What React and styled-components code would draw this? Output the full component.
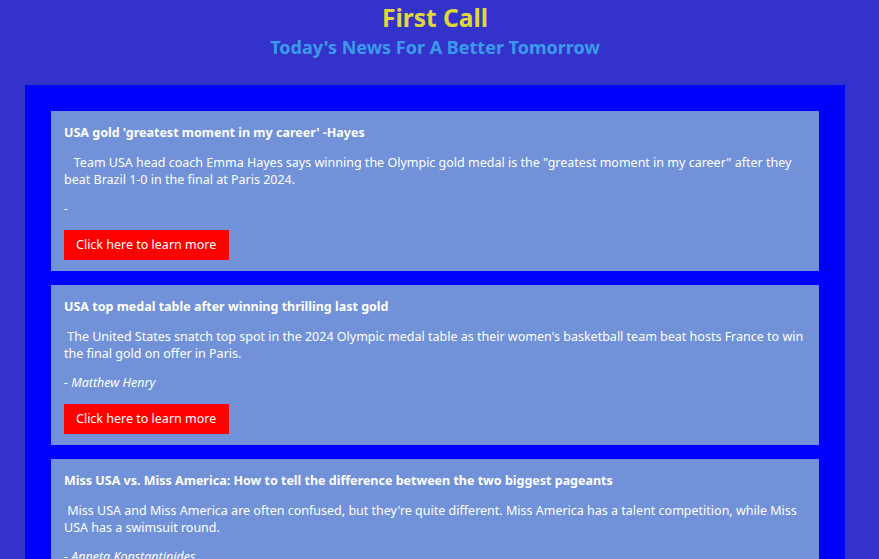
import React from 'react';
import styled, { createGlobalStyle } from 'styled-components';

const GlobalStyle = createGlobalStyle`
  html, body {
    margin: 0;
    padding: 0;
    background: #3333cc;
    font-family: "Noto Sans", "Open Sans", sans-serif;
  }
`;

const Page = styled.div`
  width: 870px;
`;

const Header = styled.header`
  text-align: center;
  padding-top: 2px;
  height: 85px;
  box-sizing: border-box;
`;

const Title = styled.h1`
  margin: 0;
  font-size: 24.5px;
  line-height: 31px;
  font-weight: 700;
  color: #e0d83a;
`;

const Subtitle = styled.h2`
  margin: 0;
  font-size: 18px;
  line-height: 28px;
  font-weight: 700;
  color: #3b9bea;
`;

const Feed = styled.main`
  width: 820px;
  margin: 0 auto;
  background: #0000ff;
  padding: 26px;
  box-sizing: border-box;
  display: flex;
  flex-direction: column;
  gap: 14px;
`;

const Card = styled.article`
  background: #7192d9;
  padding: 13px 13px 11px;
  color: #ffffff;
  font-size: 12.5px;
`;

const Headline = styled.h3`
  margin: 0 0 13px;
  font-size: 12.5px;
  line-height: 17px;
  font-weight: 700;
`;

const Summary = styled.p`
  margin: 0 0 12px;
  line-height: 17px;
`;

const Byline = styled.p`
  margin: 0 0 13px;
  line-height: 17px;
  font-style: italic;
`;

const LearnButton = styled.a`
  display: inline-block;
  background: #ff0000;
  color: #ffffff;
  text-decoration: none;
  padding: 0 12px;
  width: 165px;
  box-sizing: border-box;
  height: 30px;
  line-height: 30px;
  font-size: 12.5px;
`;

const stories = [
  {
    title: "USA gold 'greatest moment in my career' -Hayes",
    summary:
      '\u00a0\u00a0\u00a0Team USA head coach Emma Hayes says winning the Olympic gold medal is the "greatest moment in my career" after they beat Brazil 1-0 in the final at Paris 2024.',
    author: '',
  },
  {
    title: 'USA top medal table after winning thrilling last gold',
    summary:
      '\u00a0The United States snatch top spot in the 2024 Olympic medal table as their women\'s basketball team beat hosts France to win the final gold on offer in Paris.',
    author: 'Matthew Henry',
  },
  {
    title: 'Miss USA vs. Miss America: How to tell the difference between the two biggest pageants',
    summary:
      '\u00a0Miss USA and Miss America are often confused, but they\'re quite different. Miss America has a talent competition, while Miss USA has a swimsuit round.',
    author: 'Anneta Konstantinides',
  },
];

export default function App() {
  return (
    <Page>
      <GlobalStyle />
      <Header>
        <Title>First Call</Title>
        <Subtitle>Today's News For A Better Tomorrow</Subtitle>
      </Header>
      <Feed>
        {stories.map((s) => (
          <Card key={s.title}>
            <Headline>{s.title}</Headline>
            <Summary>{s.summary}</Summary>
            <Byline>- {s.author}</Byline>
            <LearnButton href="#">Click here to learn more</LearnButton>
          </Card>
        ))}
      </Feed>
    </Page>
  );
}
